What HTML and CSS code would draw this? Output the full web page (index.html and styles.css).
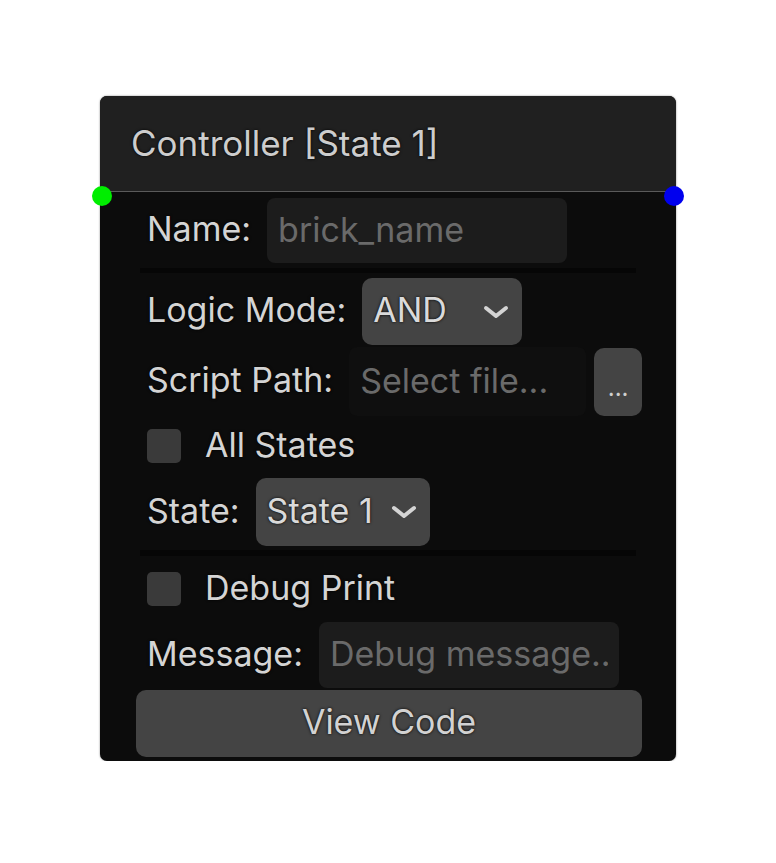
FILE: index.html
```html
<!DOCTYPE html>
<html lang="en">
<head>
    <meta charset="UTF-8">
    <meta name="viewport" content="width=device-width, initial-scale=1.0">
    <title>Controller Node</title>
    <link rel="stylesheet" href="styles.css">
</head>
<body>
    <div class="canvas">
        <div class="node">
            <span class="handle handle-in"></span>
            <span class="handle handle-out"></span>

            <div class="node-header">Controller [State 1]</div>

            <div class="node-body">
                <div class="row row-name">
                    <label class="field-label">Name:</label>
                    <div class="text-input name-input"><span class="placeholder">brick_name</span></div>
                </div>

                <div class="divider"></div>

                <div class="row row-logic">
                    <label class="field-label">Logic Mode:</label>
                    <div class="select logic-select">
                        <span class="select-value">AND</span>
                        <svg class="chevron" viewBox="0 0 26 14" width="26" height="14">
                            <path d="M3 3 L13 11 L23 3" fill="none" stroke="#d4d4d4" stroke-width="4" stroke-linecap="round" stroke-linejoin="round"/>
                        </svg>
                    </div>
                </div>

                <div class="row row-script">
                    <label class="field-label">Script Path:</label>
                    <div class="text-input script-input"><span class="placeholder">Select file...</span></div>
                    <button class="browse-btn">...</button>
                </div>

                <div class="row row-check row-all">
                    <span class="checkbox"></span>
                    <span class="check-label">All States</span>
                </div>

                <div class="row row-state">
                    <label class="field-label">State:</label>
                    <div class="select state-select">
                        <span class="select-value">State 1</span>
                        <svg class="chevron" viewBox="0 0 26 14" width="26" height="14">
                            <path d="M3 3 L13 11 L23 3" fill="none" stroke="#d4d4d4" stroke-width="4" stroke-linecap="round" stroke-linejoin="round"/>
                        </svg>
                    </div>
                </div>

                <div class="divider divider-low"></div>

                <div class="row row-check row-debug">
                    <span class="checkbox"></span>
                    <span class="check-label">Debug Print</span>
                </div>

                <div class="row row-message">
                    <label class="field-label">Message:</label>
                    <div class="text-input message-input"><span class="placeholder">Debug message...</span></div>
                </div>

                <button class="view-code">View Code</button>
            </div>
        </div>
    </div>
</body>
</html>
```

FILE: styles.css
```css
body {
    margin: 0;
    background-color: #ffffff;
    font-family: Inter, "Noto Sans", sans-serif;
}
.canvas {
    display: flex;
    justify-content: center;
    padding-top: 96px;
}
.node {
    position: relative;
    width: 576px;
    background-color: #0c0c0c;
    border-radius: 7px;
    box-shadow: 0 0 2px rgba(0, 0, 0, 0.5);
}
.handle {
    position: absolute;
    top: 90px;
    width: 20px;
    height: 20px;
    border-radius: 50%;
}
.handle-in {
    left: -8px;
    background-color: #00ee00;
}
.handle-out {
    right: -8px;
    background-color: #0000ee;
}
.node-header {
    height: 96px;
    box-sizing: border-box;
    padding: 0 0 2px 31px;
    display: flex;
    align-items: center;
    background-color: #202020;
    border-bottom: 1px solid #5a5a5a;
    border-radius: 7px 7px 0 0;
    color: #cdcdcd;
    font-size: 35px;
    text-shadow: 0 0 3px #000;
}
.node-body {
    padding: 6px 34px 4px 36px;
    display: flex;
    flex-direction: column;
}
.row {
    display: flex;
    align-items: center;
    padding-left: 11px;
}
.field-label, .check-label {
    color: #d4d4d4;
    font-size: 34px;
    white-space: nowrap;
    padding-bottom: 4px;
    text-shadow: 0 0 3px #000;
}
.field-label {
    margin-right: 16px;
}
.text-input {
    box-sizing: border-box;
    height: 100%;
    display: flex;
    align-items: center;
    padding: 0 11px;
    background-color: #1c1c1c;
    border-radius: 8px;
    white-space: nowrap;
}
.placeholder {
    min-width: 0;
    overflow: hidden;
    padding-bottom: 3px;
    color: #6a6a6a;
    font-size: 34px;
}
.select {
    box-sizing: border-box;
    height: 100%;
    display: flex;
    align-items: center;
    justify-content: space-between;
    padding: 0 13px 0 11px;
    background-color: #444444;
    border-radius: 10px;
    color: #dadada;
    font-size: 34px;
    text-shadow: 0 0 3px #000;
}
.select-value {
    padding-bottom: 4px;
}
.chevron {
    flex-shrink: 0;
}
.divider {
    height: 5px;
    margin: 5px 6px 5px 4px;
    background-color: #060606;
}
.divider-low {
    height: 6px;
    margin: 4px 6px 16px 4px;
}

.row-name { height: 65px; }
.name-input { width: 300px; }

.row-logic { height: 67px; }
.logic-select { width: 160px; }

.row-script { height: 69px; margin-top: 2px; }
.script-input {
    width: 238px;
    background-color: #0f0f0f;
}
.browse-btn {
    height: 68px;
    width: 48px;
    margin-left: 8px;
    border: none;
    border-radius: 10px;
    background-color: #444444;
    color: #cfcfcf;
    font-family: inherit;
    font-size: 24px;
    padding: 12px 0 0;
}

.row-check { height: 34px; }
.row-all { margin-top: 13px; }
.checkbox {
    width: 34px;
    height: 34px;
    border-radius: 5px;
    background-color: #3a3a3a;
    margin-right: 24px;
}

.row-state { height: 68px; margin-top: 15px; }
.state-select { width: 174px; }

.row-message { height: 66px; margin-top: 16px; }
.message-input { width: 300px; }

.view-code {
    height: 67px;
    margin-top: 2px;
    border: none;
    border-radius: 10px;
    background-color: #444444;
    color: #d2d2d2;
    font-family: inherit;
    font-size: 34px;
    padding: 0 0 4px;
    text-shadow: 0 0 3px #000;
}
```
